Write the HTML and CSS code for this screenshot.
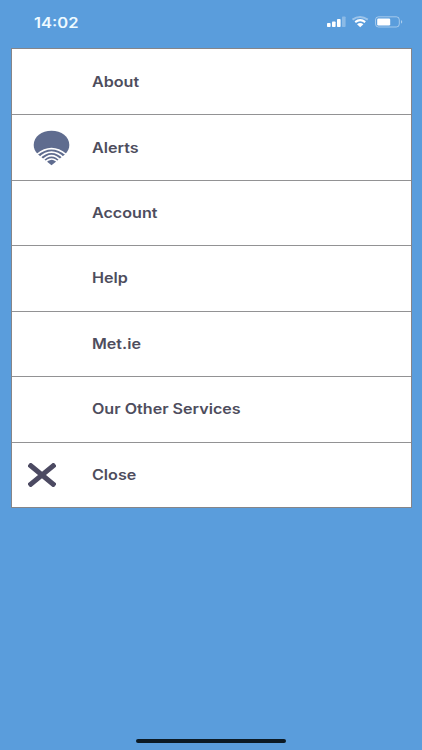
FILE: index.html
```html
<!DOCTYPE html>
<html lang="en">
<head>
<meta charset="utf-8">
<title>Menu</title>
<link rel="stylesheet" href="styles.css">
</head>
<body>
<div class="screen">
  <header class="status">
    <span class="time">14:02</span>
    <svg class="indicators" width="78" height="16" viewBox="0 0 78 16">
      <g fill="#fff">
        <rect x="1" y="9" width="3.6" height="4" rx=".8"/>
        <rect x="6" y="7.5" width="3.6" height="5.5" rx=".8"/>
        <rect x="11" y="5" width="3.6" height="8" rx=".8"/>
        <rect x="16" y="2.5" width="3.6" height="10.5" rx=".8" opacity=".3"/>
      </g>
      <g fill="none" stroke="#fff" stroke-width="2">
        <path d="M26.5 5.6Q34 .2 41.8 5.6" opacity=".4"/>
        <path d="M29.2 8.1Q34.2 4.1 39.2 8.1"/>
      </g>
      <path d="M31 10.2Q34.2 7.8 37.4 10.2L34.2 13.2Z" fill="#fff"/>
      <rect x="49.5" y="2.8" width="23.8" height="10.2" rx="3" fill="none" stroke="#fff" opacity=".45"/>
      <rect x="51.2" y="4.5" width="13" height="7" rx="1.2" fill="#fff"/>
      <path d="M75 6Q77.5 7.9 75 9.8Z" fill="#fff" opacity=".5"/>
    </svg>
  </header>
  <nav class="menu">
    <a class="item"><span class="icon"></span><span class="label">About</span></a>
    <a class="item">
      <span class="icon">
        <svg class="alert" width="37" height="36" viewBox="0 0 37 36">
          <path d="M18.5 .8C28.4 .8 36.3 6.8 36.3 15C36.3 18.2 35 21.4 32.2 24.3L18.5 35.3L4.8 24.3C2 21.4 .7 18.2 .7 15C.7 6.8 8.6 .8 18.5 .8Z" fill="#5f6c8f"/>
          <g fill="none" stroke="#fff" stroke-width="1.6">
            <path d="M3.8 24.6Q18.5 12.6 33.2 24.6"/>
            <path d="M6 28.3Q18.5 16.1 31 28.3"/>
            <path d="M8.8 31Q18.5 20.2 28.2 31"/>
            <path d="M11.5 33Q18.5 25.1 25.5 33"/>
          </g>
        </svg>
      </span>
      <span class="label">Alerts</span>
    </a>
    <a class="item"><span class="icon"></span><span class="label">Account</span></a>
    <a class="item"><span class="icon"></span><span class="label">Help</span></a>
    <a class="item"><span class="icon"></span><span class="label">Met.ie</span></a>
    <a class="item"><span class="icon"></span><span class="label wide">Our Other Services</span></a>
    <a class="item">
      <span class="icon">
        <svg class="close" width="28" height="24" viewBox="0 0 28 24">
          <path d="M2.8 2.8L25.2 21.2M25.2 2.8L2.8 21.2" stroke="#4c4a62" stroke-width="5" stroke-linecap="square" stroke-linejoin="round"/>
        </svg>
      </span>
      <span class="label">Close</span>
    </a>
  </nav>
  <div class="home"></div>
</div>
</body>
</html>
```
FILE: styles.css
```css
* { box-sizing: border-box; }
body { margin: 0; background: #5a9ddc; font-family: Inter, "Liberation Sans", sans-serif; }
.screen { height: 750px; display: flex; flex-direction: column; }
.status {
  height: 48px;
  padding: 0 18px 4px 34px;
  display: flex;
  align-items: center;
  justify-content: space-between;
  flex: none;
}
.time {
  color: #eefaff;
  font-size: 14px;
  font-weight: 600;
  transform: scaleX(1.18);
  transform-origin: left;
}
.menu {
  width: 401px;
  height: 460px;
  margin-left: 10.5px;
  border: 1px solid #858589;
  background: #fff;
  display: grid;
  grid-template-rows: repeat(7, 1fr);
}
.item { display: flex; align-items: center; }
.item + .item { border-top: 1px solid #929294; }
.icon { width: 80.5px; display: flex; }
.alert { margin: 0 0 0 21.5px; }
.close { margin-left: 16px; }
.label {
  color: #4e4d5d;
  font-size: 14px;
  line-height: 20px;
  font-weight: 600;
  white-space: nowrap;
  transform: translateY(-0.4px) scaleX(1.15);
  transform-origin: left;
}
.home {
  width: 150px;
  height: 4px;
  margin: auto auto 7.5px;
  border-radius: 2px;
  background: #0c1a24;
}
```
